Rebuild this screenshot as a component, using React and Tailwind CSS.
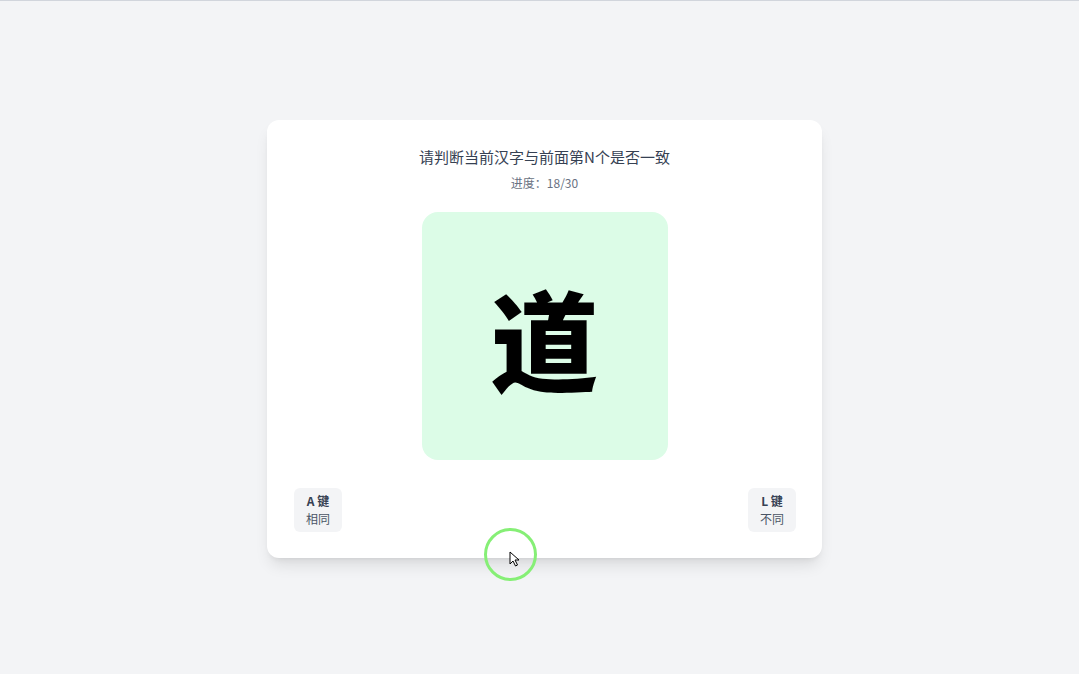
export default function App() {
  return (
    <div
      className="relative min-h-[674px] w-full bg-[#f3f4f6] border-t border-gray-300 flex items-center justify-center pl-[10px]"
      style={{ fontFamily: '"Noto Sans CJK SC", "Noto Sans", sans-serif' }}
    >
      <div className="w-[555px] bg-white rounded-xl shadow-lg px-[26px] pt-[25px] pb-[26px] flex flex-col items-center mt-[3px]">
        <h1 className="text-[15px] leading-6 text-gray-700">请判断当前汉字与前面第N个是否一致</h1>
        <p className="mt-[6px] text-xs leading-4 text-gray-500">进度：18/30</p>
        <div className="mt-[21px] w-[246px] h-[248px] rounded-2xl bg-[#dcfce7] flex items-center justify-center">
          <span className="text-[108px] leading-none font-black text-black">道</span>
        </div>
        <div className="mt-[28px] w-full flex justify-between">
          <div className="ml-px px-3 py-1 rounded-md bg-gray-100 text-xs leading-[18px] text-center">
            <div className="font-bold text-gray-700">A 键</div>
            <div className="text-gray-600">相同</div>
          </div>
          <div className="px-3 py-1 rounded-md bg-gray-100 text-xs leading-[18px] text-center">
            <div className="font-bold text-gray-700">L 键</div>
            <div className="text-gray-600">不同</div>
          </div>
        </div>
      </div>
      <div className="absolute left-[484px] top-[527px] w-[53px] h-[53px] rounded-full border-[3px] border-[#86ef76]" />
      <svg className="absolute left-[509px] top-[550px]" width="12" height="16" viewBox="0 0 12 16">
        <path d="M1 1 L1 13 L4 10 L6.5 15 L8.5 14 L6 9 L10 9 Z" fill="white" stroke="black" strokeWidth="1" />
      </svg>
    </div>
  );
}
